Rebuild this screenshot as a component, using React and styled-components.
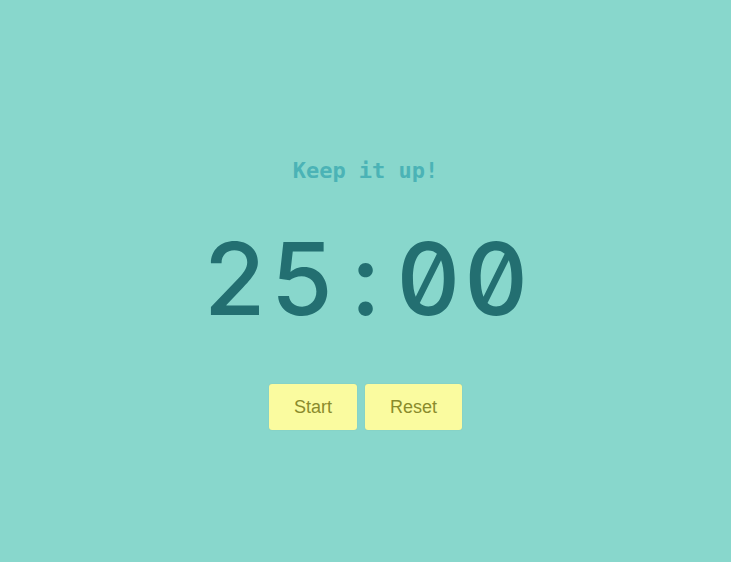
import React, { useState, useEffect } from 'react';
import styled, { createGlobalStyle } from 'styled-components';

const GlobalStyle = createGlobalStyle`
  html, body {
    margin: 0;
    padding: 0;
    height: 100%;
    background: #88d7cc;
  }
`;

function pad(n) {
  return String(n).padStart(2, '0');
}

export default function App() {
  const [seconds, setSeconds] = useState(25 * 60);
  const [running, setRunning] = useState(false);

  useEffect(() => {
    if (!running) return undefined;
    const id = setInterval(() => setSeconds((s) => (s > 0 ? s - 1 : 0)), 1000);
    return () => clearInterval(id);
  }, [running]);

  return (
    <Page>
      <GlobalStyle />
      <Message>Keep it up!</Message>
      <Clock>
        {pad(Math.floor(seconds / 60))}
        <Colon>:</Colon>
        {pad(seconds % 60)}
      </Clock>
      <Controls>
        <Button onClick={() => setRunning(!running)}>{running ? 'Pause' : 'Start'}</Button>
        <Button onClick={() => { setRunning(false); setSeconds(25 * 60); }}>Reset</Button>
      </Controls>
    </Page>
  );
}

const Page = styled.div`
  display: flex;
  flex-direction: column;
  align-items: center;
  min-height: 100vh;
  box-sizing: border-box;
  padding-top: 157px;
`;

const Message = styled.div`
  font-family: "DejaVu Sans Mono", monospace;
  font-weight: bold;
  font-size: 22px;
  line-height: 28px;
  color: #4bb3b6;
`;

const Clock = styled.div`
  margin-top: 29px;
  padding-left: 3px;
  font-family: Inter, "DejaVu Sans Mono", monospace;
  font-variant-numeric: tabular-nums slashed-zero;
  font-weight: 500;
  font-size: 100px;
  line-height: 130px;
  letter-spacing: 3px;
  color: #236f71;
`;

const Colon = styled.span`
  display: inline-block;
  margin: 0 14px;
`;

const Controls = styled.div`
  display: flex;
  gap: 8px;
  margin-top: 40px;
`;

const Button = styled.button`
  height: 46px;
  padding: 0 25px;
  border: none;
  border-radius: 3px;
  background: #fafb9f;
  box-shadow: 0 0 1px rgba(120, 140, 80, 0.4);
  font-family: "Liberation Sans", Arial, sans-serif;
  font-size: 18px;
  color: #8a8b2c;
  cursor: pointer;
`;
